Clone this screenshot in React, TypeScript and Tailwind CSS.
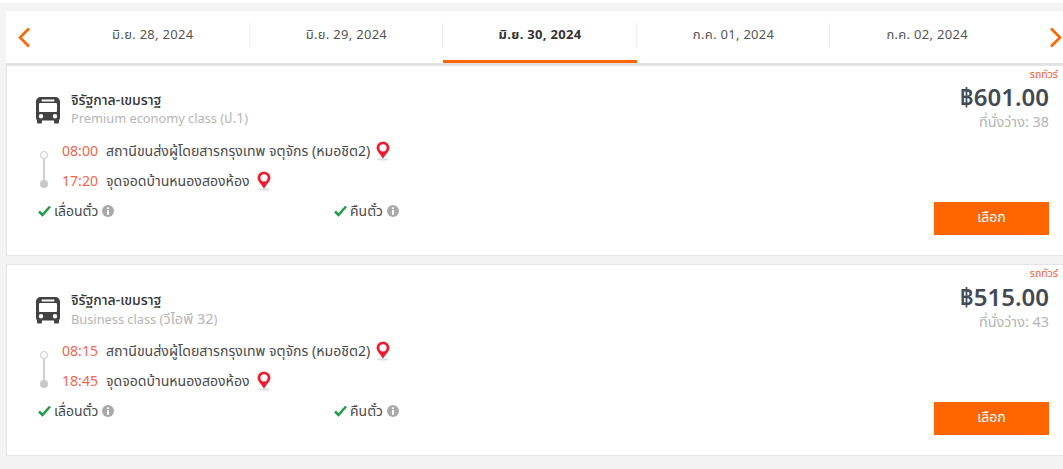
import React from "react";

const Pin = () => (
  <svg width="16" height="20" viewBox="0 0 16 20" className="shrink-0">
    <ellipse cx="8" cy="18.300" rx="6" ry="1.300" fill="#e0e0e0" />
    <path d="M8 0.800C4.200 0.800 1.600 3.500 1.600 6.900C1.600 10.600 5.600 13.200 8 17.600C10.400 13.200 14.400 10.600 14.400 6.900C14.400 3.500 11.800 0.800 8 0.800Z" fill="#ec1c2e" />
    <circle cx="8" cy="6.800" r="3.600" fill="#fff" />
  </svg>
);

const Bus = () => (
  <svg width="26" height="28" viewBox="0 0 26 28" className="shrink-0">
    <path fillRule="evenodd" fill="#434343" d="M6 1H20C23 1 25 3 25 6V22C25 23 24.400 23.600 24 24V26C24 27 23.400 27.500 22.500 27.500H20.500C19.600 27.500 19 27 19 26V24.500H7V26C7 27 6.400 27.500 5.500 27.500H3.500C2.600 27.500 2 27 2 26V24C1.600 23.600 1 23 1 22V6C1 3 3 1 6 1ZM7 3.500C6.500 3.500 6.500 5.500 7 5.500H19C19.500 5.500 19.500 3.500 19 3.500ZM4 8V15C4 15.500 4.500 16 5 16H21C21.500 16 22 15.500 22 15V8C22 7.500 21.500 7 21 7H5C4.500 7 4 7.500 4 8ZM6 18A2.200 2.200 0 1 0 6 22.400A2.200 2.200 0 1 0 6 18ZM20 18A2.200 2.200 0 1 0 20 22.400A2.200 2.200 0 1 0 20 18Z" />
  </svg>
);

const Check = () => (
  <svg width="13" height="12" viewBox="0 0 13 12" className="shrink-0">
    <path d="M1 6.500L4.500 10L12 1.500" fill="none" stroke="#1f9d45" strokeWidth="2.500" />
  </svg>
);

const Info = () => (
  <svg width="12" height="12" viewBox="0 0 12 12" className="shrink-0">
    <circle cx="6" cy="6" r="6" fill="#a9a9a9" />
    <rect x="5" y="2.300" width="2" height="1.800" fill="#fff" />
    <rect x="5" y="5" width="2" height="4.700" fill="#fff" />
  </svg>
);

const Chevron = ({ flip }: { flip?: boolean }) => (
  <svg width="13" height="21" viewBox="0 0 13 21" className="shrink-0">
    <path d={flip ? "M2 1.500L11 10.500L2 19.500" : "M11 1.500L2 10.500L11 19.500"} fill="none" stroke="#ff6600" strokeWidth="2.600" />
  </svg>
);

const dates = ["มิ.ย. 28, 2024", "มิ.ย. 29, 2024", "มิ.ย. 30, 2024", "ก.ค. 01, 2024", "ก.ค. 02, 2024"];

type CardProps = {
  cls: React.ReactNode;
  price: string;
  seats: string;
  dep: string;
  arr: string;
  className: string;
  second?: boolean;
};

const Card = ({ cls, price, seats, dep, arr, className, second }: CardProps) => (
  <div className={`bg-white border border-[#e4e4e8] border-r-0 flex ${className}`}>
    <div className={`flex-1 pl-[29px] flex flex-col ${second ? "pt-[1px]" : ""}`}>
      <div className="flex items-start gap-[10px] mt-[25px]">
        <div className="mt-[5px] -ml-[1px]"><Bus /></div>
        <div className="flex flex-col">
          <div className="text-[14px] leading-[18px] font-medium text-[#333]">จิรัฐกาล-เขมราฐ</div>
          <div className="text-[12.800px] leading-[18px] h-[18px] text-[#b5b5b5]">{cls}</div>
        </div>
      </div>
      <div className="flex mt-[9px]">
        <div className="w-[15px] flex flex-col items-center pt-[15px]">
          <div className="w-[8px] h-[8px] rounded-full border border-[#c8c8c8] bg-white" />
          <div className="w-[2px] h-[21px] bg-[#cfcfcf]" />
          <div className="w-[8px] h-[8px] rounded-full bg-[#c8c8c8]" />
        </div>
        <div className="flex flex-col ml-[11px] text-[14.100px] text-[#4a4a4a]">
          <div className="flex items-center h-[30px]">
            <span className="w-[36px] text-[#f2664a] mr-[8px]">{dep}</span>
            <span>สถานีขนส่งผู้โดยสารกรุงเทพ จตุจักร (หมอชิต2)</span>
            <span className="ml-[5px]"><Pin /></span>
          </div>
          <div className="flex items-center h-[30px]">
            <span className="w-[36px] text-[#f2664a] mr-[8px]">{arr}</span>
            <span>จุดจอดบ้านหนองสองห้อง</span>
            <span className="ml-[6px]"><Pin /></span>
          </div>
        </div>
      </div>
      <div className="flex mt-[6px] text-[14px] text-[#4a4a4a] leading-[18px]">
        <div className="w-[296px] ml-[2px] flex items-center gap-[3px]">
          <Check /><span>เลื่อนตั๋ว</span><span className="ml-[1px]"><Info /></span>
        </div>
        <div className="flex items-center gap-[3px]">
          <Check /><span>คืนตั๋ว</span><span className="ml-[1px]"><Info /></span>
        </div>
      </div>
    </div>
    <div className="w-[130px] flex flex-col items-end pr-[5px]">
      <div className="text-[10.500px] leading-[14px] text-[#f15a2a] mt-[1px]">รถทัวร์</div>
      <div className="pr-[9px] flex flex-col items-end flex-1">
        <div className={`text-[24px] leading-[30px] font-semibold text-[#434a54] ${second ? "mt-[2px]" : "mt-[1px]"}`}>{price}</div>
        <div className="text-[14.400px] leading-[18px] text-[#b5b5b5] mt-[1px]">{seats}</div>
        <button className="w-[115px] h-[33px] bg-[#ff6600] text-white text-[14px] pb-[5px] mt-auto mb-[20px]">เลือก</button>
      </div>
    </div>
  </div>
);

export default function App() {
  return (
    <div className="w-[1063px] h-[469px] bg-[#f3f3f3] overflow-hidden font-['Noto_Sans','Noto_Sans_Thai','Liberation_Sans',sans-serif]">
      <div className="h-[3px] bg-white" />
      <div className="ml-[6px] mt-[8px] h-[54px] bg-white border-b-2 border-[#e3e3e6] flex">
        <div className="w-[50px] pl-[12px] flex items-center"><Chevron /></div>
        <div className="flex">
          {dates.map((d, i) => (
            <div key={d} className={`relative w-[193.600px] h-[52px] flex items-center justify-center text-[13px] tracking-[0.3px] ${i === 2 ? "pb-[1px] font-bold text-[#333] border-b-[3px] border-[#ff6600]" : "pb-[4px] text-[#555]"}`}>
              {d}
              {i < 4 && <span className="absolute right-0 top-[12px] h-[25px] w-px bg-[#eeeeee]" />}
            </div>
          ))}
        </div>
        <div className="flex-1 flex items-center justify-end pr-[1px]"><Chevron flip /></div>
      </div>
      <Card className="ml-[6px] h-[191px]" cls={<>Premium economy class (<span className="text-[14px]">ป.1</span>)</>} price="฿601.00" seats="ที่นั่งว่าง: 38" dep="08:00" arr="17:20" />
      <Card className="ml-[6px] mt-[8px] h-[192px]" second cls={<>Business class (<span className="text-[14.500px]">วีไอพี 32</span>)</>} price="฿515.00" seats="ที่นั่งว่าง: 43" dep="08:15" arr="18:45" />
    </div>
  );
}
